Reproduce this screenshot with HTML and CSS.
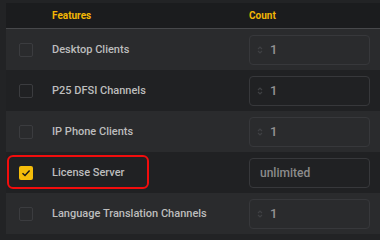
FILE: index.html
```html
<!DOCTYPE html>
<html>
<head>
<meta charset="utf-8">
<link rel="stylesheet" href="styles.css">
</head>
<body>
<div class="wrap">
  <div class="table">
    <div class="row head">
      <div class="cell cb"></div>
      <div class="cell label">Features</div>
      <div class="cell count">Count</div>
    </div>
    <div class="row odd">
      <div class="cell cb"><span class="box"></span></div>
      <div class="cell label">Desktop Clients</div>
      <div class="cell count"><div class="input"><svg class="spin" width="6" height="10" viewBox="0 0 6 10"><path d="M1 4 L3 2 L5 4 M1 6 L3 8 L5 6" fill="none" stroke="#3f4043" stroke-width="1.2"/></svg><span class="num">1</span></div></div>
    </div>
    <div class="row even">
      <div class="cell cb"><span class="box"></span></div>
      <div class="cell label">P25 DFSI Channels</div>
      <div class="cell count"><div class="input"><svg class="spin" width="6" height="10" viewBox="0 0 6 10"><path d="M1 4 L3 2 L5 4 M1 6 L3 8 L5 6" fill="none" stroke="#3f4043" stroke-width="1.2"/></svg><span class="num">1</span></div></div>
    </div>
    <div class="row odd">
      <div class="cell cb"><span class="box"></span></div>
      <div class="cell label">IP Phone Clients</div>
      <div class="cell count"><div class="input"><svg class="spin" width="6" height="10" viewBox="0 0 6 10"><path d="M1 4 L3 2 L5 4 M1 6 L3 8 L5 6" fill="none" stroke="#3f4043" stroke-width="1.2"/></svg><span class="num">1</span></div></div>
    </div>
    <div class="row even highlight">
      <div class="cell cb"><span class="box checked"><svg width="14" height="14" viewBox="0 0 14 14"><path d="M3.5 7.2 L6 9.5 L10.6 4.6" fill="none" stroke="#1a1a1a" stroke-width="1.5"/></svg></span></div>
      <div class="cell label">License Server</div>
      <div class="cell count"><div class="input text">unlimited</div></div>
      <div class="mark"></div>
    </div>
    <div class="row odd">
      <div class="cell cb"><span class="box"></span></div>
      <div class="cell label">Language Translation Channels</div>
      <div class="cell count"><div class="input"><svg class="spin" width="6" height="10" viewBox="0 0 6 10"><path d="M1 4 L3 2 L5 4 M1 6 L3 8 L5 6" fill="none" stroke="#3f4043" stroke-width="1.2"/></svg><span class="num">1</span></div></div>
    </div>
  </div>
</div>
</body>
</html>
```
FILE: styles.css
```css
html, body {
  margin: 0;
  padding: 0;
  background: #222325;
  font-family: Roboto, "Liberation Sans", sans-serif;
}
.wrap {
  padding: 3px 0 0 6px;
  width: 374px;
  overflow: hidden;
}
.table {
  display: flex;
  flex-direction: column;
}
.row {
  display: grid;
  grid-template-columns: 46px 197px 131px;
  height: 41px;
  align-items: center;
  position: relative;
}
.row.head {
  height: 25px;
  background: #1b1c1e;
  border-bottom: 1px solid #47484b;
}
.row.head .cell {
  color: #f2b705;
  font-weight: 700;
  font-size: 10px;
}
.row.odd { background: #2a2b2d; }
.row.even { background: #202123; }
.cell.cb {
  display: flex;
  align-items: center;
  padding-left: 13px;
}
.box {
  width: 14px;
  height: 14px;
  box-sizing: border-box;
  border: 1.5px solid #3b3c3f;
  border-radius: 2px;
  display: block;
}
.box.checked {
  background: #f5bd0a;
  border: none;
}
.box.checked svg { display: block; }
.label {
  color: #bdbdbd;
  font-size: 11px;
  font-weight: 500;
  white-space: nowrap;
}
.count {
  font-size: 10px;
}
.input {
  width: 121px;
  height: 30px;
  box-sizing: border-box;
  border: 1px solid #37383b;
  border-radius: 4px;
  display: flex;
  align-items: center;
  padding-left: 7px;
  gap: 7px;
}
.spin { display: block; }
.num {
  color: #929292;
  font-size: 13px;
  font-weight: 500;
}
.input.text {
  padding-left: 10px;
  color: #8c8c8c;
  font-size: 12px;
  font-weight: 500;
}
.mark {
  position: absolute;
  left: 1px;
  top: 3px;
  width: 142px;
  height: 34px;
  box-sizing: border-box;
  border: 2px solid #f20d0d;
  border-radius: 6px;
  pointer-events: none;
}
```
